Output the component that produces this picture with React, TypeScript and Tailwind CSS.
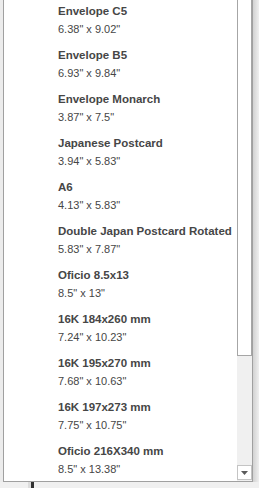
const SIZES = [
  { name: "Envelope C5", dims: '6.38" x 9.02"' },
  { name: "Envelope B5", dims: '6.93" x 9.84"' },
  { name: "Envelope Monarch", dims: '3.87" x 7.5"' },
  { name: "Japanese Postcard", dims: '3.94" x 5.83"' },
  { name: "A6", dims: '4.13" x 5.83"' },
  { name: "Double Japan Postcard Rotated", dims: '5.83" x 7.87"' },
  { name: "Oficio 8.5x13", dims: '8.5" x 13"' },
  { name: "16K 184x260 mm", dims: '7.24" x 10.23"' },
  { name: "16K 195x270 mm", dims: '7.68" x 10.63"' },
  { name: "16K 197x273 mm", dims: '7.75" x 10.75"' },
  { name: "Oficio 216X340 mm", dims: '8.5" x 13.38"' },
];

export default function App() {
  return (
    <div className="w-[259px] h-[488px] bg-[#f0f0f0] overflow-hidden flex flex-col font-['Liberation_Sans',sans-serif]">
      <div className="flex h-[482px]">
        <div className="w-[3px] bg-[#ececec]" />
        {/* popup */}
        <div className="w-[250px] h-[482px] bg-white border-l border-r border-b border-[#a0a0a0] flex">
          <div className="flex-1 pl-[54px] pt-[2px] overflow-hidden">
            {SIZES.map((s) => (
              <div key={s.name} className="h-[44px] text-[#464646]">
                <div className="text-[11.5px] leading-[18px] font-bold whitespace-nowrap">{s.name}</div>
                <div className="text-[11px] leading-[18px] whitespace-nowrap">{s.dims}</div>
              </div>
            ))}
          </div>
          {/* scrollbar */}
          <div className="w-[15px] bg-[#f0f0f0] flex flex-col">
            <div className="h-[356px] bg-white border border-t-0 border-[#a6a6a6]" />
            <div className="flex-1" />
            <div className="h-[15px] mb-[1px] bg-white border border-[#c4c4c4] flex items-center justify-center">
              <svg width="7" height="4" viewBox="0 0 7 4">
                <path d="M0 0h7L3.5 4z" fill="#5a5a5a" />
              </svg>
            </div>
          </div>
        </div>
        <div className="w-[6px] bg-gradient-to-r from-[#d2d2d2] to-[#efefef]" />
      </div>
      {/* underlying window strip */}
      <div className="flex-1 flex pl-[28px]">
        <div className="w-[3px] bg-[#dcdcdc]" />
        <div className="w-[3px] bg-[#303030]" />
      </div>
    </div>
  );
}
